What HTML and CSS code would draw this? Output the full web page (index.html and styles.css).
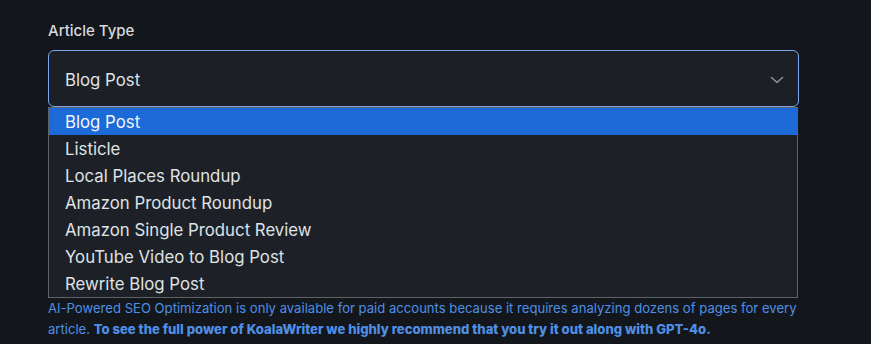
FILE: index.html
```html
<!DOCTYPE html>
<html lang="en">
<head>
  <meta charset="UTF-8" />
  <meta name="viewport" content="width=device-width, initial-scale=1.0"/>
  <title>Article Type</title>
  <link rel="stylesheet" href="styles.css">
</head>
<body>

  <div class="field">
    <label class="field-label">Article Type</label>

    <!-- Select aberto -->
    <div class="select">
      <span class="select-value">Blog Post</span>
      <svg class="chevron" width="14" height="8" viewBox="0 0 14 8">
        <path d="M1.5 1.5 L7 6.5 L12.5 1.5" fill="none" stroke="currentColor" stroke-width="1.6" stroke-linecap="round" stroke-linejoin="round"/>
      </svg>
    </div>

    <ul class="options">
      <li class="option active">Blog Post</li>
      <li class="option">Listicle</li>
      <li class="option">Local Places Roundup</li>
      <li class="option">Amazon Product Roundup</li>
      <li class="option">Amazon Single Product Review</li>
      <li class="option">YouTube Video to Blog Post</li>
      <li class="option">Rewrite Blog Post</li>
    </ul>

    <p class="hint">
      AI-Powered SEO Optimization is only available for paid accounts because it requires analyzing dozens of pages for every article.
      <strong>To see the full power of KoalaWriter we highly recommend that you try it out along with GPT-4o.</strong>
    </p>
  </div>

</body>
</html>
```

FILE: styles.css
```css
body {
  font-family: Inter, "Noto Sans", sans-serif;
  background-color: #13171c;
  color: #e3e5e8;
  margin: 0;
  padding: 0;
}

.field {
  width: 751px;
  padding: 21px 0 0 48px;
}

.field-label {
  display: block;
  font-size: 15px;
  line-height: 20px;
  font-weight: 500;
  color: #d7dadd;
  margin-bottom: 9px;
}

.select {
  display: flex;
  align-items: center;
  justify-content: space-between;
  height: 57px;
  box-sizing: border-box;
  padding: 2px 14px 0 16px;
  background-color: #1c2026;
  border: 1px solid #7ba6ee;
  border-radius: 6px;
}

.select-value {
  font-size: 16.8px;
  color: #dfe2e6;
}

.chevron {
  color: #8a8e95;
}

.options {
  list-style: none;
  margin: 0;
  padding: 0;
  width: 750px;
  box-sizing: border-box;
  background-color: #1d2127;
  border: 1px solid #5f6368;
}

.option {
  height: 27px;
  line-height: 29px;
  padding-left: 16px;
  font-size: 16.8px;
  color: #dfe2e6;
}

.option.active {
  background-color: #1b6ad8;
  color: #f3f6fb;
}

.hint {
  margin: 0;
  font-size: 13.1px;
  line-height: 21px;
  color: #4f8fe6;
}

.hint strong {
  font-weight: 800;
  color: #4f8fe6;
}
```
